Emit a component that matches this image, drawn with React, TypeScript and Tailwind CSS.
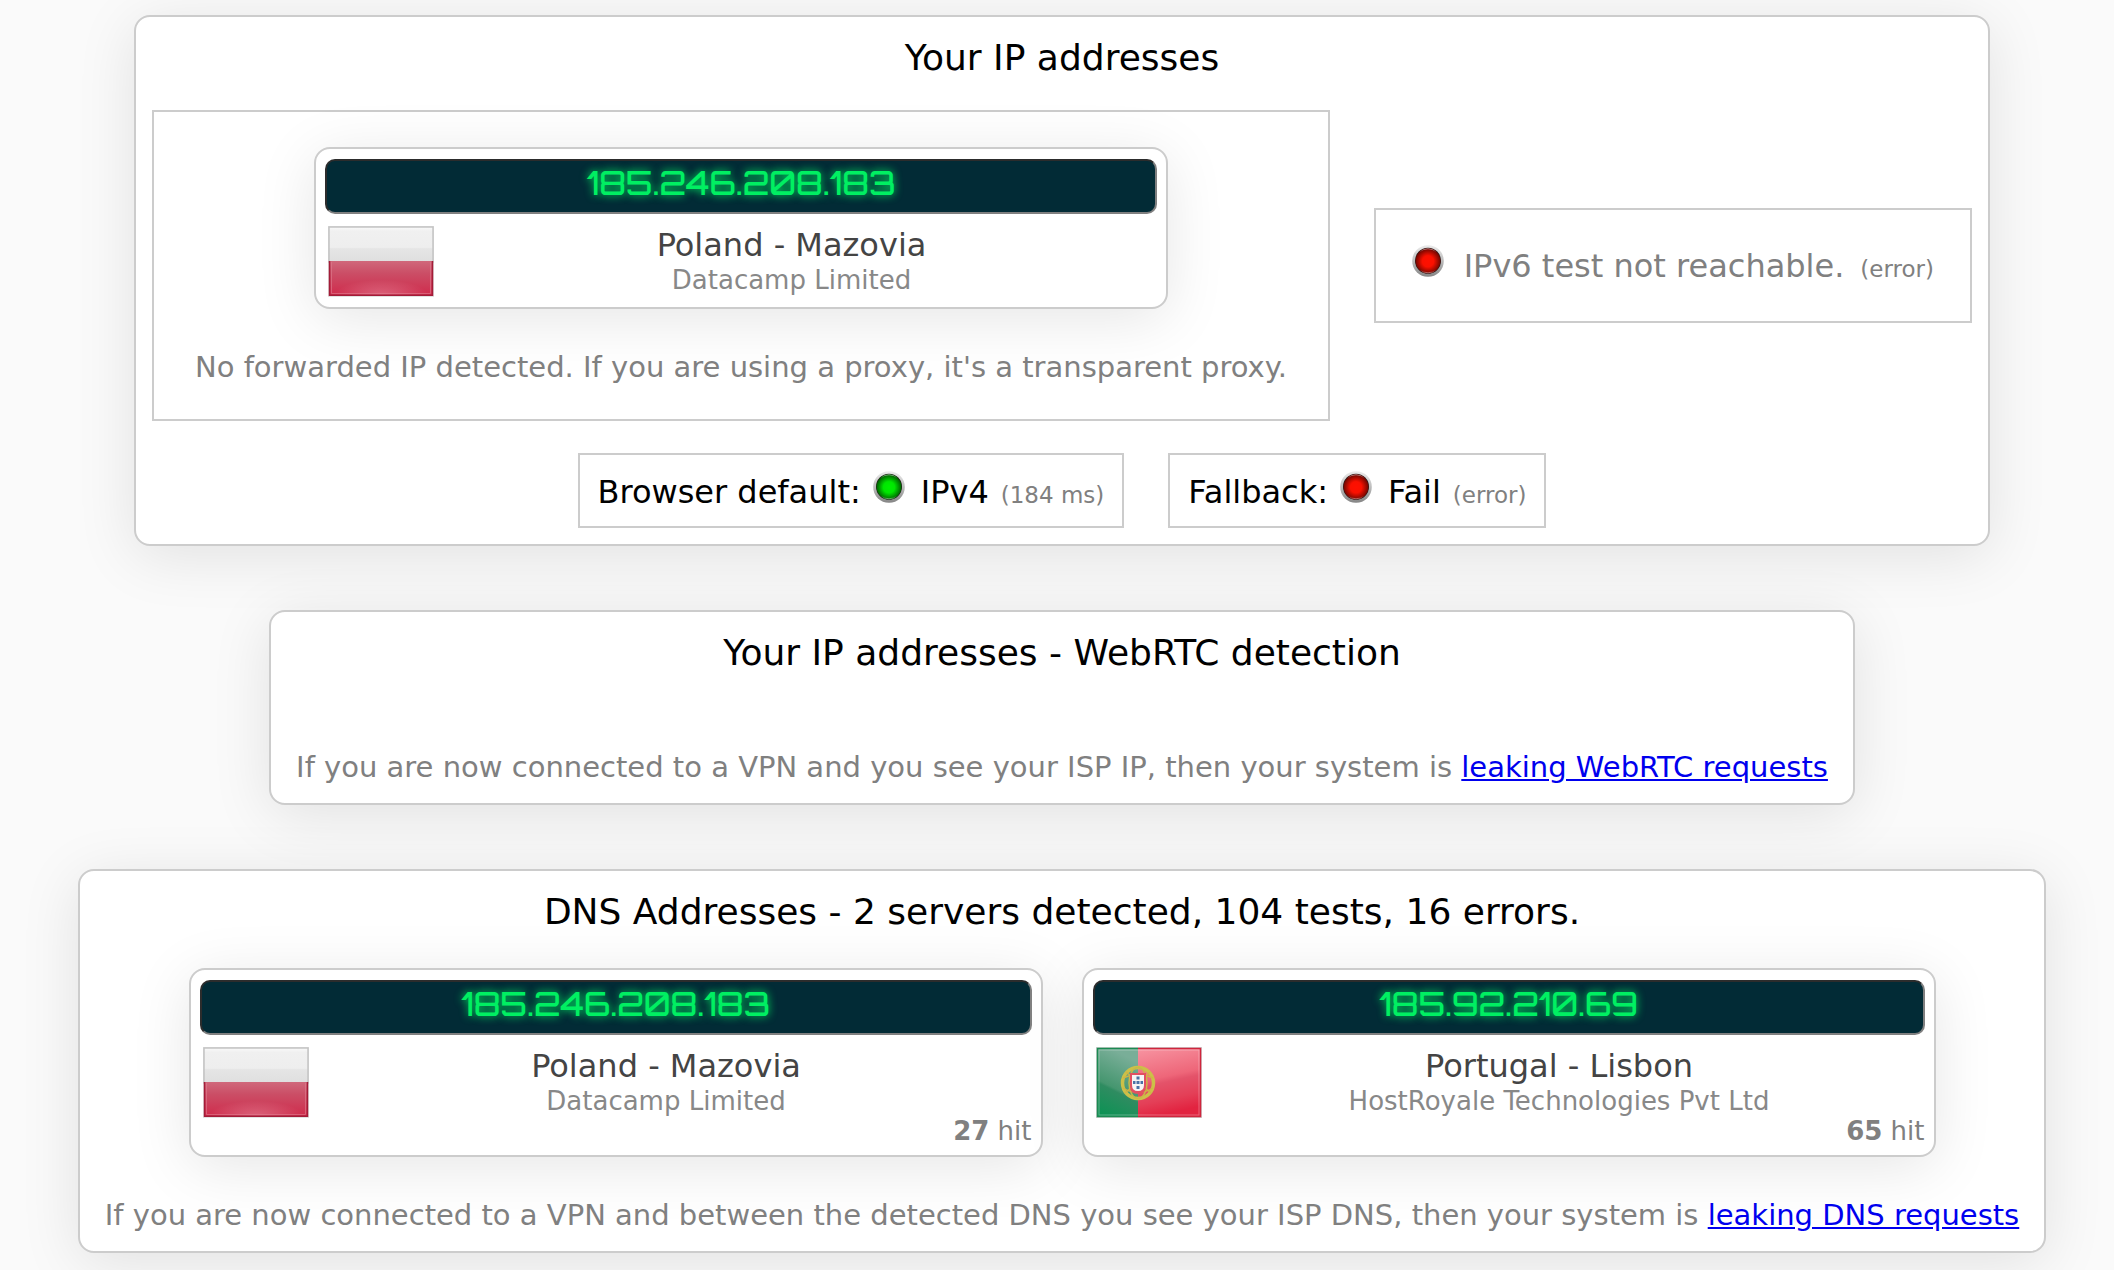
import React from "react";

type Country = "poland" | "portugal";

function Led({ color }: { color: "red" | "green" }) {
  const core = color === "red" ? ["#ff1000", "#fa1000", "#700600"] : ["#00f000", "#00e600", "#006000"];
  const id = React.useId();
  return (
    <svg className="size-8 shrink-0" viewBox="0 0 32 32" role="img" aria-label={color === "red" ? "Failed" : "Reachable"}>
      <defs>
        <linearGradient id={`${id}ring`} x1="0" y1="0" x2="0" y2="1">
          <stop offset="0" stopColor="#ececec" />
          <stop offset="0.5" stopColor="#bdbdbd" />
          <stop offset="1" stopColor="#848484" />
        </linearGradient>
        <radialGradient id={`${id}core`} cx="0.5" cy="0.52" r="0.5">
          <stop offset="0" stopColor={core[0]} />
          <stop offset="0.45" stopColor={core[1]} />
          <stop offset="1" stopColor={core[2]} />
        </radialGradient>
        <linearGradient id={`${id}gloss`} x1="0" y1="0" x2="0" y2="1">
          <stop offset="0" stopColor="#fff" stopOpacity="0.5" />
          <stop offset="0.14" stopColor="#fff" stopOpacity="0" />
          <stop offset="0.88" stopColor="#fff" stopOpacity="0" />
          <stop offset="1" stopColor="#fff" stopOpacity="0.4" />
        </linearGradient>
      </defs>
      <circle cx="16" cy="16" r="15.8" fill={`url(#${id}ring)`} />
      <circle cx="16" cy="15.8" r="13" fill="#241a1a" />
      <circle cx="16" cy="15.8" r="12.5" fill={`url(#${id}core)`} />
      <circle cx="16" cy="15.8" r="12" fill="none" stroke={`url(#${id}gloss)`} strokeWidth="1" />
    </svg>
  );
}

function PolandFlag() {
  return (
    <svg className="h-[71px] w-[106px] shrink-0" viewBox="0 0 106 71" role="img" aria-label="Poland">
      <defs>
        <linearGradient id="pl-white" x1="0" y1="0" x2="0" y2="1">
          <stop offset="0" stopColor="#fafafa" />
          <stop offset="0.12" stopColor="#f0f0f0" />
          <stop offset="0.58" stopColor="#eeeeee" />
          <stop offset="0.62" stopColor="#e5e5e5" />
          <stop offset="1" stopColor="#dfdfdf" />
        </linearGradient>
        <linearGradient id="pl-red" x1="0" y1="0" x2="0" y2="1">
          <stop offset="0" stopColor="#d0687b" />
          <stop offset="0.35" stopColor="#cb4e66" />
          <stop offset="1" stopColor="#d02a4b" />
        </linearGradient>
        <radialGradient id="pl-glow" cx="0.5" cy="1" r="0.45">
          <stop offset="0" stopColor="#fff" stopOpacity="0.25" />
          <stop offset="1" stopColor="#fff" stopOpacity="0" />
        </radialGradient>
      </defs>
      <rect width="106" height="71" fill="#e2e2e2" />
      <rect x="1" y="1" width="104" height="35" fill="url(#pl-white)" stroke="#c4c4c4" strokeWidth="1.5" />
      <rect x="1" y="35" width="104" height="35" fill="url(#pl-red)" />
      <rect x="1" y="35" width="104" height="34" fill="url(#pl-glow)" />
      <path d="M1.5 35V69.2H104.5V35" fill="none" stroke="#a31c38" strokeWidth="1.5" />
      <path d="M3.5 36V67.5H102.5V36" fill="none" stroke="#e07d90" strokeOpacity="0.6" />
    </svg>
  );
}

function PortugalFlag() {
  return (
    <svg className="h-[71px] w-[106px] shrink-0" viewBox="0 0 106 71" role="img" aria-label="Portugal">
      <defs>
        <linearGradient id="pt-green" x1="0.3" y1="0" x2="0" y2="1">
          <stop offset="0" stopColor="#79ae98" />
          <stop offset="0.5" stopColor="#45966f" />
          <stop offset="0.54" stopColor="#2f8c61" />
          <stop offset="1" stopColor="#079352" />
        </linearGradient>
        <linearGradient id="pt-red" x1="0" y1="0" x2="0.2" y2="1">
          <stop offset="0" stopColor="#f795a2" />
          <stop offset="0.48" stopColor="#ee6679" />
          <stop offset="0.56" stopColor="#e4536a" />
          <stop offset="0.8" stopColor="#e43f57" />
          <stop offset="1" stopColor="#e22340" />
        </linearGradient>
      </defs>
      <rect width="106" height="71" fill="#cfcfcf" />
      <rect x="1" y="1" width="42" height="69" fill="url(#pt-green)" />
      <rect x="42" y="1" width="63" height="69" fill="url(#pt-red)" />
      <path d="M42 1.5H1.5V69.5H42" fill="none" stroke="#1b8a52" strokeWidth="1.5" />
      <path d="M42 1.5H104.5V69.5H42" fill="none" stroke="#d0253d" strokeWidth="1.5" />
      <rect x="3" y="3" width="100" height="65" fill="none" stroke="#fff" strokeOpacity="0.3" />
      <circle cx="42" cy="36" r="15.5" fill="none" stroke="#ccc048" strokeWidth="3.5" />
      <ellipse cx="42" cy="36" rx="9" ry="15.5" fill="none" stroke="#c9b848" strokeWidth="1.5" />
      <path d="M27 31Q42 24 57 31M27 41Q42 50 57 41M30 25L55 46M29 46L54 25" fill="none" stroke="#d0b345" strokeWidth="1.4" />
      <path d="M34 26H50V39Q50 47 42 47Q34 47 34 39Z" fill="#e25061" />
      <path d="M36 28H48V38Q48 44 42 44Q36 44 36 38Z" fill="#f6f4f4" />
      <g fill="#4a72a6">
        <rect x="40.5" y="29.5" width="3" height="3" />
        <rect x="40.5" y="34" width="3" height="3" />
        <rect x="40.5" y="39" width="3" height="3" />
        <rect x="37" y="34" width="2.5" height="3" />
        <rect x="44.5" y="34" width="2.5" height="3" />
      </g>
    </svg>
  );
}

function Panel({ title, width, children }: { title: string; width: string; children: React.ReactNode }) {
  return (
    <section
      className={`flex w-full flex-col items-center rounded-2xl border-2 border-[#ccc] bg-white px-4 pt-[19px] shadow-[0_10px_60px_rgba(0,0,0,0.1)] ${width}`}
    >
      <h2 className="text-[36px] leading-[44px] text-black">{title}</h2>
      {children}
    </section>
  );
}

interface ServerProps {
  ip: string;
  country: Country;
  place: string;
  provider: string;
  hits?: number;
}

function ServerCard({ ip, country, place, provider, hits }: ServerProps) {
  return (
    <article className="w-full max-w-[854px] rounded-2xl border-2 border-[#ccc] bg-white px-[9px] py-2.5 shadow-[0_10px_60px_rgba(0,0,0,0.1)]">
      <div className="flex h-[55px] justify-center rounded-[10px] border-2 border-t-[#2c2c2c] border-r-[#808080] border-b-[#808080] border-l-[#2c2c2c] bg-[#022b36] font-['Orbitron','DejaVu_Sans',sans-serif] text-[32px] leading-[44px] font-medium text-[#00ef62] slashed-zero [text-shadow:0_0_8px_#00ef62]">
        {ip}
      </div>
      <div className="flex items-start pt-3 pr-2 pl-[3px]">
        {country === "poland" ? <PolandFlag /> : <PortugalFlag />}
        <div className="flex-1 text-center">
          <p className="text-[32px] leading-[38px] text-[#444]">{place}</p>
          <p className="text-[26px] leading-[33px] text-[#888]">{provider}</p>
        </div>
      </div>
      {hits !== undefined && (
        <p className="text-right text-[26px] leading-[27px] text-[#808080]">
          <strong>{hits}</strong> hit
        </p>
      )}
    </article>
  );
}

function Probe({ label, color, result, detail }: { label: string; color: "red" | "green"; result: string; detail: string }) {
  return (
    <div className="flex items-baseline border-2 border-[#ccc] px-[18px] pt-4 pb-3 text-[32px] leading-[43px] text-black">
      <span className="mr-3">{label}</span>
      <Led color={color} />
      <span className="mr-3 ml-4">{result}</span>
      <span className="text-[23px] leading-none text-[#808080]">{detail}</span>
    </div>
  );
}

function Note({ text, link }: { text: string; link?: string }) {
  return (
    <p className="text-center text-[29px] leading-[36px] text-[#808080]">
      {text}
      {link && (
        <a href="#" className="text-[#0000ee] underline">
          {link}
        </a>
      )}
    </p>
  );
}

export default function App() {
  return (
    <main className="flex min-h-screen flex-col items-center gap-16 bg-[#fafafa] pt-[15px] pb-4 pl-2.5 font-['DejaVu_Sans',sans-serif]">
      <Panel title="Your IP addresses" width="max-w-[1856px]">
        <div className="mt-[30px] flex w-full items-center justify-between">
          <div className="flex w-full max-w-[1178px] flex-col items-center gap-10 border-2 border-[#ccc] px-9 pt-[35px] pb-[34px]">
            <ServerCard ip="185.246.208.183" country="poland" place="Poland - Mazovia" provider="Datacamp Limited" />
            <Note text="No forwarded IP detected. If you are using a proxy, it's a transparent proxy." />
          </div>
          <div className="flex shrink-0 items-baseline border-2 border-[#ccc] px-9 pt-[35px] pb-[33px] text-[32px] leading-[43px] text-[#808080]">
            <Led color="red" />
            <span className="mr-4 ml-5">IPv6 test not reachable.</span>
            <span className="text-[23px] leading-none">(error)</span>
          </div>
        </div>
        <div className="mt-8 mb-4 flex gap-11">
          <Probe label="Browser default:" color="green" result="IPv4" detail="(184 ms)" />
          <Probe label="Fallback:" color="red" result="Fail" detail="(error)" />
        </div>
      </Panel>

      <Panel title="Your IP addresses - WebRTC detection" width="max-w-[1586px]">
        <div className="mt-[74px] mb-[18px]">
          <Note
            text="If you are now connected to a VPN and you see your ISP IP, then your system is "
            link="leaking WebRTC requests"
          />
        </div>
      </Panel>

      <Panel title="DNS Addresses - 2 servers detected, 104 tests, 16 errors." width="max-w-[1968px]">
        <div className="mt-[34px] mb-10 flex w-full justify-center gap-[39px]">
          <ServerCard ip="185.246.208.183" country="poland" place="Poland - Mazovia" provider="Datacamp Limited" hits={27} />
          <ServerCard
            ip="185.92.210.69"
            country="portugal"
            place="Portugal - Lisbon"
            provider="HostRoyale Technologies Pvt Ltd"
            hits={65}
          />
        </div>
        <div className="mb-[18px]">
          <Note
            text="If you are now connected to a VPN and between the detected DNS you see your ISP DNS, then your system is "
            link="leaking DNS requests"
          />
        </div>
      </Panel>
    </main>
  );
}
